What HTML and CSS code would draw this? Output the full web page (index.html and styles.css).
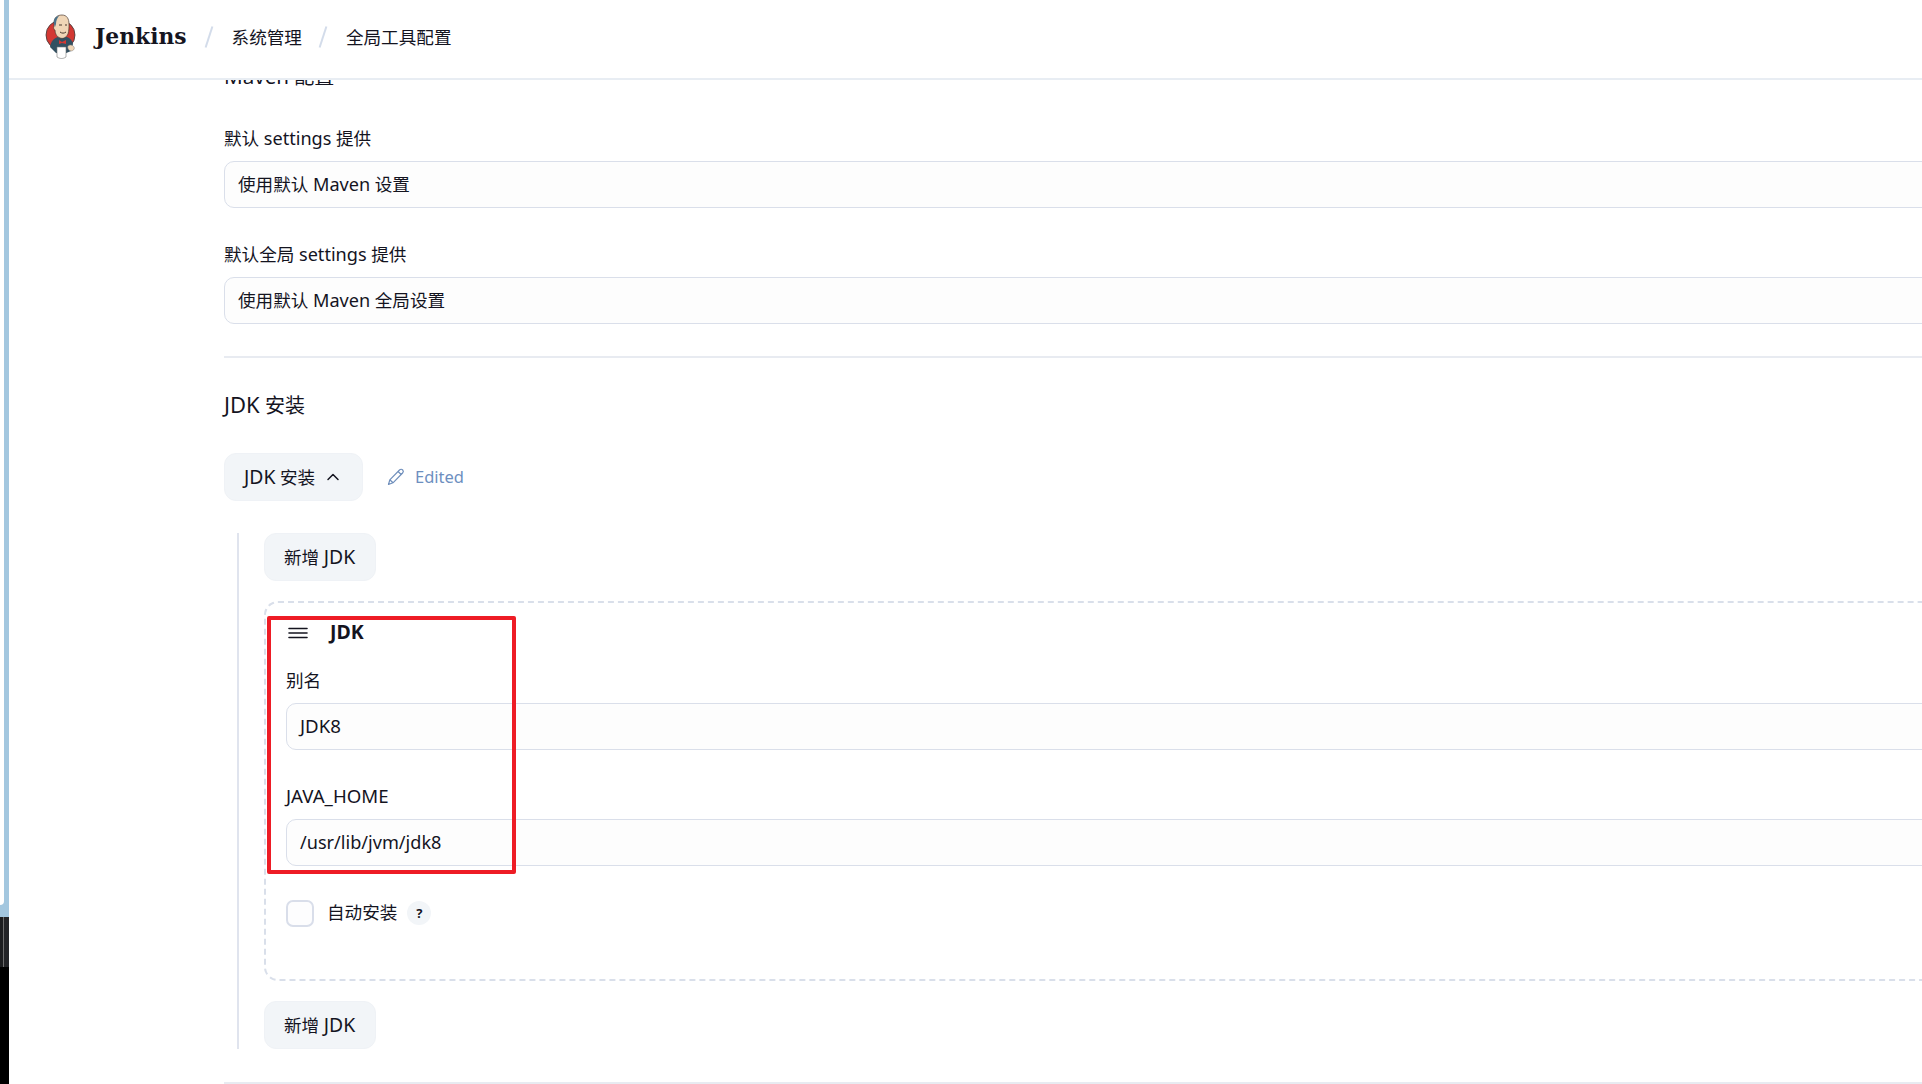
FILE: index.html
```html
<!DOCTYPE html>
<html lang="zh-CN">
<head>
<meta charset="utf-8">
<title>全局工具配置 - Jenkins</title>
<link rel="stylesheet" href="styles.css">
</head>
<body>
<div class="edge">
  <div class="edge-blue"><div class="edge-white"></div></div>
  <div class="edge-dark"></div>
  <div class="edge-black"></div>
</div>
<div class="main">
  <header class="topbar">
    <svg class="logo" viewBox="0 0 32 46" width="32" height="46">
      <circle cx="15.500" cy="21" r="14.500" fill="#d33833" stroke="#3a3a3a" stroke-width=".8"/>
      <path d="M5 33c1-6 4-9 8-10l9 0c3 1 5 3 6 7l-2 7-7 3-8-1z" fill="#335061"/>
      <path d="M9 9C9 3 13 1 17 1c5 0 7 4 7 9 0 3 0 7-1 10-2 4-5 5-8 4-3-1-5-4-5-8-1 0-2-2-1-4z" fill="#f0d6b7" stroke="#4a3a30" stroke-width=".7"/>
      <path d="M9 10C8 5 11 2 14 2c-2 2-3 5-3 8l-1 3z" fill="#49728b"/>
      <path d="M14 11h3M20 11h2M15 18c2 1.500 4 1.500 6 0" stroke="#49392f" stroke-width="1" fill="none"/>
      <path d="M14 26l3 2 4-2 0 4-4-1-3 1z" fill="#d33833"/>
      <path d="M12 33h9v10c-3 2-6 2-9 0z" fill="#fff" stroke="#777" stroke-width=".6"/>
      <path d="M23 32c2-2 5-1 6 1s-1 4-3 4-4-3-3-5z" fill="#f0d6b7" stroke="#777" stroke-width=".5"/>
    </svg>
    <span class="brand">Jenkins</span>
    <span class="slash"></span>
    <span class="crumb">系统管理</span>
    <span class="slash"></span>
    <span class="crumb">全局工具配置</span>
  </header>
  <div class="viewport">
    <main class="content">
      <h2 class="heading maven"><span class="en-s">Maven</span> 配置</h2>
      <div class="field first-field">
        <label class="label">默认 <span class="en-s">settings</span> 提供</label>
        <div class="input">使用默认 <span class="en-s">Maven</span> 设置</div>
      </div>
      <div class="field">
        <label class="label">默认全局 <span class="en-s">settings</span> 提供</label>
        <div class="input">使用默认 <span class="en-s">Maven</span> 全局设置</div>
      </div>
      <hr class="rule rule-top">
      <h2 class="heading jdk"><span class="en-l">JDK</span> 安装</h2>
      <div class="toggle-row">
        <button class="btn toggle"><span class="btn-text"><span class="en-l">JDK</span> 安装</span>
          <svg viewBox="0 0 14 14" width="14" height="14"><path d="M2 9.500 7 4.500l5 5" fill="none" stroke="#14141f" stroke-width="1.500" stroke-linecap="round" stroke-linejoin="round"/></svg>
        </button>
        <span class="edited">
          <svg viewBox="0 0 18 18" width="18" height="18"><path d="M1.500 16.500 2.800 11.800 12.500 2c1-1 2.300-1 3.200 0 .8.900.8 2.100-.1 3L6 14.800zM2.800 11.800 6 14.800M11 3.500l3.500 3.200" fill="none" stroke="#6f8fbc" stroke-width="1.200" stroke-linejoin="round"/></svg>
          <span class="edited-text">Edited</span>
        </span>
      </div>
      <div class="repeat">
        <button class="btn add"><span class="btn-text">新增 <span class="en-l">JDK</span></span></button>
        <section class="card">
          <div class="card-title">
            <svg viewBox="0 0 20 14" width="20" height="14"><path d="M1 2.500h18M1 7h18M1 11.500h18" stroke="#14141f" stroke-width="1.600" stroke-linecap="round"/></svg>
            <strong>JDK</strong>
          </div>
          <div class="field card-field-a">
            <label class="label">别名</label>
            <div class="input"><span class="en">JDK8</span></div>
          </div>
          <div class="field card-field-b">
            <label class="label"><span class="en">JAVA_HOME</span></label>
            <div class="input"><span class="en-s">/usr/lib/jvm/jdk8</span></div>
          </div>
          <div class="check-row">
            <span class="checkbox"></span>
            <span class="check-label">自动安装</span>
            <span class="help">?</span>
          </div>
          <div class="highlight"></div>
        </section>
        <button class="btn add add-last"><span class="btn-text">新增 <span class="en-l">JDK</span></span></button>
      </div>
      <hr class="rule rule-bottom">
    </main>
  </div>
</div>
</body>
</html>
```
FILE: styles.css
```css
* { box-sizing: border-box; }
html, body { margin: 0; height: 100%; background: #fff; overflow: hidden; }
body {
  display: flex;
  width: 1922px;
  height: 1084px;
  font-family: "Noto Sans", "Noto Sans CJK SC", sans-serif;
  font-size: 17.6px;
  color: #14141f;
}
.en-l { font-size: 1.1em; line-height: 1; }
.en { font-size: 1.06em; line-height: 1; }
.en-s { font-size: 1.03em; line-height: 1; }
.edge { width: 9px; flex: none; display: flex; flex-direction: column; }
.edge-blue { height: 917px; background: #a3c7df; }
.edge-white { width: 4px; height: 905px; background: #fff; border-bottom-right-radius: 4px; }
.edge-dark { height: 50px; background: #222326; border-left: 3px solid #1c1d1f; position: relative; }
.edge-dark::after { content: ""; position: absolute; left: 0; top: 0; width: 1px; height: 100%; background: #6d6d6d; }
.edge-black { flex: 1; background: #000; }

.main { flex: 1; min-width: 0; display: flex; flex-direction: column; height: 1084px; }
.topbar {
  flex: none;
  height: 80px;
  display: flex;
  align-items: center;
  padding: 0 0 4px 36px;
  border-bottom: 2px solid #e8edf3;
  background: #fff;
  position: relative;
  z-index: 2;
}
.logo { flex: none; margin-top: -1px; }
.brand {
  margin-left: 18px;
  margin-right: 1px;
  font-family: "DejaVu Serif", serif;
  font-weight: 700;
  font-size: 21.8px;
  color: #15151f;
  margin-top: -2px;
}
.slash {
  width: 2px;
  height: 22px;
  margin: 0 22px 0 20px;
  background: #d3dcea;
  transform: rotate(18deg);
}
.crumb { line-height: 24px; white-space: nowrap; }

.viewport { flex: 1; overflow: hidden; min-height: 0; }
.content { width: 1800px; margin-left: 215px; }
.heading { margin: 0; font-size: 20px; font-weight: 400; line-height: 28px; white-space: nowrap; }
.maven { margin-top: -17px; }
.field { display: flex; flex-direction: column; }
.first-field { margin-top: 36px; }
.field + .field { margin-top: 35px; }
.label { line-height: 22px; height: 24px; margin-bottom: 10px; }
.input {
  height: 47px;
  padding-left: 13px;
  display: block;
  line-height: 45px;
  background: #fdfdfd;
  border: 1.500px solid #dadfea;
  border-radius: 10px;
}
.rule { border: 0; height: 2px; background: #e8ebf1; margin: 0; }
.rule-top { margin-top: 32px; }
.jdk { margin-top: 34px; }
.toggle-row { display: flex; align-items: center; margin-top: 33px; height: 48px; }
.btn {
  height: 48px;
  border: 1px solid #eff2f6;
  border-radius: 12px;
  background: #f2f5f8;
  font: inherit;
  color: inherit;
  display: inline-flex;
  align-items: center;
  padding: 0 19px;
  white-space: nowrap;
}
.btn-text { margin-top: -2px; }
.toggle { width: 139px; gap: 11px; }
.edited { display: inline-flex; align-items: center; gap: 10px; margin-left: 24px; color: #6d8fbf; font-size: 16.500px; }
.edited-text { margin-top: -2px; }
.repeat {
  margin: 32px 0 0 13px;
  padding-left: 25px;
  border-left: 2px solid #e0e4ee;
  height: 516px;
}
.add { display: flex; width: 112px; padding: 0 19px; }
.add-last { margin-top: 20px; }
.card {
  position: relative;
  margin-top: 20px;
  height: 380px;
  padding: 16px 0 0 20px;
  border: 2px dashed #d9dfea;
  border-radius: 14px;
}
.card-title { display: flex; align-items: center; gap: 22px; height: 28px; margin-left: 2px; }
.card-title strong { font-weight: 700; font-size: 19.5px; line-height: 24px; margin-top: -2px; }
.card-field-a { margin-top: 22px; }
.field.card-field-b { margin-top: 35px; }
.check-row { display: flex; align-items: center; margin-top: 33px; height: 28px; }
.checkbox { width: 28px; height: 27px; border: 2px solid #d9deea; border-radius: 7px; background: #fdfdfe; }
.check-label { margin-left: 13px; line-height: 24px; margin-top: -2px; }
.help {
  margin-left: 10px;
  width: 24px;
  height: 24px;
  border-radius: 50%;
  background: #f2f5f8;
  font-size: 13px;
  font-weight: 700;
  display: flex;
  align-items: center;
  justify-content: center;
}
.highlight {
  position: absolute;
  left: 1px;
  top: 13px;
  width: 249px;
  height: 258px;
  border: 4px solid #ee1c25;
  border-radius: 2px;
  pointer-events: none;
}
.rule-bottom { margin-top: 33px; }
```
